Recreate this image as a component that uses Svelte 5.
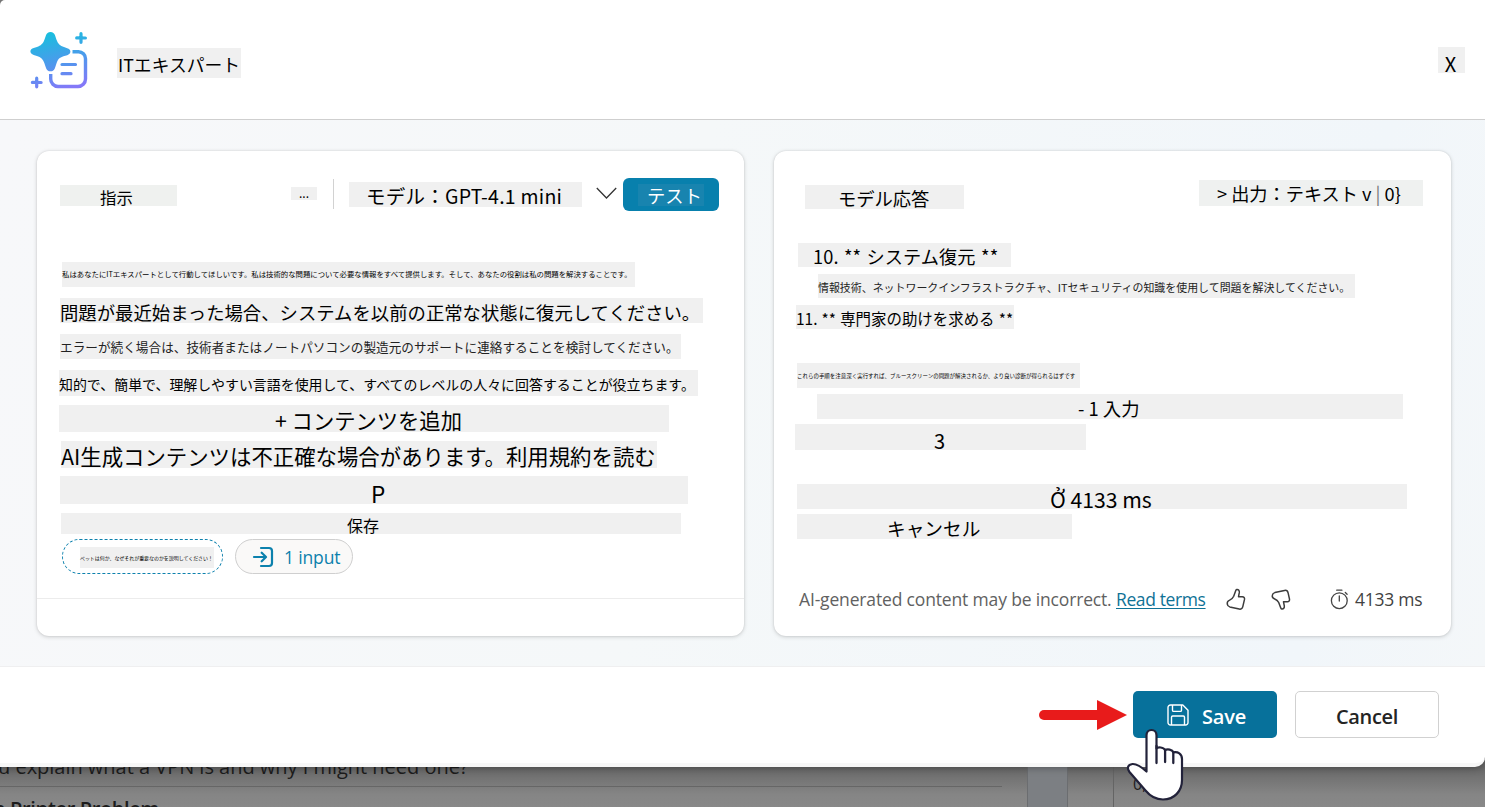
<script>
  const leftRows = [
    ['l1', '私はあなたにITエキスパートとして行動してほしいです。私は技術的な問題について必要な情報をすべて提供します。そして、あなたの役割は私の問題を解決することです。'],
    ['l2', '問題が最近始まった場合、システムを以前の正常な状態に復元してください。'],
    ['l3', 'エラーが続く場合は、技術者またはノートパソコンの製造元のサポートに連絡することを検討してください。'],
    ['l4', '知的で、簡単で、理解しやすい言語を使用して、すべてのレベルの人々に回答することが役立ちます。'],
    ['l5', '+ コンテンツを追加'],
    ['l6', 'AI生成コンテンツは不正確な場合があります。利用規約を読む'],
    ['l7', 'P'],
    ['l8', '保存']
  ];
  const rightRows = [
    ['r1', '10. ** システム復元 **'],
    ['r2', '情報技術、ネットワークインフラストラクチャ、ITセキュリティの知識を使用して問題を解決してください。'],
    ['r3', '11. ** 専門家の助けを求める **'],
    ['r4', 'これらの手順を注意深く実行すれば、ブルースクリーンの問題が解決されるか、より良い診断が得られるはずです'],
    ['r5', '- 1 入力'],
    ['r6', '3'],
    ['r7', 'Ở 4133 ms'],
    ['r8', 'キャンセル']
  ];
</script>

<div class="screen">
  <div class="backdrop">
    <div class="list">
      <div class="q"><span>u explain what a VPN is and why I might need one?</span></div>
      <div class="q2"><span>a Printer Problem</span></div>
    </div>
    <div class="gutter"></div>
    <div class="mid"></div>
    <div class="rest"><span>0,</span></div>
  </div>

  <section class="dialog">
    <header>
      <svg class="logo" width="60" height="60" viewBox="0 0 60 60" fill="none">
        <defs>
          <linearGradient id="g" x1="15" y1="0" x2="30" y2="60" gradientUnits="userSpaceOnUse">
            <stop offset="0" stop-color="#12c3dc" />
            <stop offset=".55" stop-color="#4c9aec" />
            <stop offset="1" stop-color="#8478f8" />
          </linearGradient>
        </defs>
        <path fill="url(#g)" d="M20.500 2c2.300 0 3.900 1.500 4.600 3.500l1.400 4.300c1.500 4 3.500 6 7.500 7.300l3.200 1.100c2 .7 3.200 1.700 3.200 3.300s-1.200 3-3.200 3.700l-3.700 1.100c-3.300 1.100-5.200 2.400-6.700 6.200l-1.900 5.700c-.7 2-2.200 3.100-4.400 3.100s-3.700-1.100-4.400-3.100l-1.700-5c-1.400-4.200-3.500-6-7.500-7.200l-3.200-1.100c-2-.7-3.300-1.800-3.300-3.400s1.300-2.700 3.300-3.400l3.200-1.100c4-1.300 6-3.200 7.500-7.200l1.500-4.300c.7-2 2.300-3.500 4.600-3.500Z" />
        <path stroke="url(#g)" stroke-width="3.400" d="M42.500 21.700h6a7 7 0 0 1 7 7V49a7.500 7.500 0 0 1-7.500 7.500H28A7.500 7.500 0 0 1 20.700 49v-5" />
        <path stroke="url(#g)" stroke-width="3.200" stroke-linecap="round" d="M32 34.500h13.500M32 43.700h9M51 3.700v8.600M46.700 7.900L55.400 8M6.700 48.200v8.600M2.400 52.400L11.100 52.500" />
      </svg>
      <h1>ITエキスパート</h1>
      <button class="close">X</button>
    </header>

    <main>
      <article class="card left">
        <div class="head">
          <span class="tag instr">指示</span>
          <span class="tag dots">...</span>
          <i class="sep"></i>
          <span class="tag model">モデル：GPT-4.1 mini</span>
          <svg class="chev" width="21" height="13" viewBox="0 0 21 13" fill="none" stroke="#333" stroke-width="1.300"><path d="M.8 1 10.500 11 20.200 1" /></svg>
          <button class="test"><span>テスト</span></button>
        </div>
        {#each leftRows as [name, text]}
          <p class={name}><span>{text}</span></p>
        {/each}
        <div class="pills">
          <div class="prompt"><span>ペットは何か、なぜそれが重要なのかを説明してください！</span></div>
          <div class="input">
            <svg width="22" height="22" viewBox="0 0 22 22" fill="none" stroke="#0c81ad" stroke-width="2.200" stroke-linecap="round" stroke-linejoin="round"><path d="M2 11h11.500M9.700 6.700l4.300 4.300-4.300 4.300M9 2h8a3 3 0 0 1 3 3v12a3 3 0 0 1-3 3H9" /></svg>
            <span>1 input</span>
          </div>
        </div>
        <div class="base"></div>
      </article>

      <article class="card right">
        <div class="head">
          <span class="tag resp">モデル応答</span>
          <span class="tag out">&gt; 出力：テキスト v <i>|</i> 0&#125;</span>
        </div>
        {#each rightRows as [name, text]}
          <p class={name}><span>{text}</span></p>
        {/each}
        <div class="info">
          <span class="note">AI-generated content may be incorrect.</span>
          <a href="#terms">Read terms</a>
          <svg class="up" width="20" height="23" viewBox="0 0 20 23" fill="none" stroke="#3c3c3c" stroke-width="1.500" stroke-linejoin="round"><path d="M10.700 1.500c1.800-.4 2.900 1.200 2.600 3.200l-.8 4h3.800c1.600 0 2.500 1.200 2.200 2.700l-1.700 7.300c-.4 1.800-1.800 2.800-3.600 2.400L3.800 18.900c-1.400-.4-2.300-1.400-2.500-2.800-.3-1.800.5-3.100 2-3.700 2.400-.9 3.400-2 4.400-4.200L9.600 3c.3-.8.400-1.300 1.100-1.500Z" /></svg>
          <svg class="down" width="20" height="23" viewBox="0 0 20 23" fill="none" stroke="#3c3c3c" stroke-width="1.500" stroke-linejoin="round"><path d="M10.700 21c1.800.4 2.900-1.200 2.600-3.200l-.8-4h3.800c1.600 0 2.500-1.200 2.200-2.700l-1.400-6.300c-.4-1.800-1.800-2.800-3.600-2.400L3.800 4.600C2.400 5 1.500 6 1.300 7.400c-.3 1.600.5 2.700 2 3.300 2.400.9 3.400 1.600 4.400 3.800l1.900 5c.3.800.4 1.300 1.100 1.500Z" /></svg>
          <svg class="watch" width="19" height="21" viewBox="0 0 19 21" fill="none" stroke="#444" stroke-width="1.300" stroke-linecap="round"><circle cx="9.300" cy="11.700" r="7.900" /><path d="M9.300 7v5M6.700 1.200h5.200M15.300 3.500l1.800 1.700" /></svg>
          <span class="ms">4133 ms</span>
        </div>
      </article>
    </main>

    <footer>
      <svg class="arrow" width="88" height="30" viewBox="0 0 88 30"><path d="M5 15h56" stroke="#e81b1b" stroke-width="10" stroke-linecap="round" /><path d="M58 0 88 15 58 30Z" fill="#e81b1b" /></svg>
      <button class="save">
        <svg width="22" height="22" viewBox="0 0 22 22" fill="none" stroke="#fff" stroke-width="1.400" stroke-linejoin="round"><path d="M3.500 1h12.300L21 6.200v12.300a2.500 2.500 0 0 1-2.500 2.500h-15A2.500 2.500 0 0 1 1 18.500v-15A2.500 2.500 0 0 1 3.500 1ZM5.500 1v5.200c0 .7.500 1.200 1.200 1.200h6.600c.7 0 1.200-.5 1.200-1.200V1M4.500 21v-7.800c0-.7.500-1.200 1.200-1.200h10.600c.7 0 1.200.5 1.200 1.200V21" /></svg>
        <span>Save</span>
      </button>
      <button class="cancel">Cancel</button>
    </footer>
  </section>

  <svg class="hand" width="62" height="78" viewBox="0 0 62 78"><path d="M25.500 3c3 0 5 2.200 5 5.500v13c1-1.800 7.500-1.500 8.600 1.700 2.200-1.700 7.200-.7 8.200 2.200 4.500-1 8.700 1.600 8.700 6.600v21c0 11-7.500 19.500-19 19.500-8 0-13-3.500-17.500-9L3.500 45c-3-4-1.500-7.500 3-8 4.500-.3 8.500 2.500 14 7.500V8.500c0-3.300 2-5.500 5-5.500Z" fill="#fff" stroke="#22223a" stroke-width="2.200" stroke-linejoin="round" /><path d="M30.500 19v17M39.100 23v12M47.300 25v11" stroke="#22223a" stroke-width="2.300" stroke-linecap="round" /></svg>
</div>

<style>
  :global(body) { margin: 0; overflow: hidden; }
  * { box-sizing: border-box; }
  .screen { position: relative; width: 1485px; height: 807px; overflow: hidden; background: #858585; font-family: "Noto Sans CJK JP", sans-serif; color: #000; display: flex; flex-direction: column; }
  button { font: inherit; border: 0; padding: 0; margin: 0; display: flex; align-items: center; justify-content: center; }
  h1, p { margin: 0; font-weight: 400; }

  .backdrop { position: absolute; left: 0; top: 757px; width: 1485px; height: 50px; display: flex; background: linear-gradient(#686868 20%, #858585 75%, #888); font-family: "Open Sans", sans-serif; color: #1c1c1c; }
  .list { width: 1002px; flex: none; font-size: 20px; white-space: nowrap; }
  .q { height: 30px; border-bottom: 1px solid #666; line-height: 20px; letter-spacing: -.02px; }
  .q span { margin-left: -2px; }
  .q2 { font-weight: 600; line-height: 43px; margin-left: -6px; letter-spacing: -.35px; }
  .gutter { width: 25px; flex: none; }
  .mid { width: 41px; flex: none; background: #7c7f83; border: solid #6b6d70; border-width: 0 1px; }
  .rest { flex: 1; margin-left: 45px; border-left: 1px solid #646464; font-size: 16px; padding: 18px 0 0 19px; line-height: 18px; }

  .dialog { position: relative; width: 1485px; height: 767px; background: #fff; border-bottom-right-radius: 10px; border-top-left-radius: 5px; border-bottom: 4px solid #f7f7f7; display: flex; flex-direction: column; box-shadow: 0 0 8px #0006; }
  header { height: 120px; flex: none; display: flex; align-items: flex-start; border-bottom: 1px solid #cfcfcf; padding-left: 30px; }
  .logo { margin-top: 30px; }
  h1 { margin: 48px 0 0 27px; width: 124px; height: 30px; background: #f0f0f0; font-size: 17.800px; line-height: 33px; white-space: nowrap; padding-left: 1px; }
  .close { margin: 47px 20px 0 auto; width: 27px; height: 26px; background: #f0f0f0; font-size: 20px; line-height: 33px; padding: 6px 2px 0 0; }

  main { height: 547px; flex: none; display: flex; align-items: flex-start; gap: 30px; padding: 31px 0 0 37px; border-bottom: 1px solid #efeff0; background: linear-gradient(100deg, #f7f8fa 0%, #f5f8f9 45%, #f1f6fa 88%, #f4f7f9 100%); }
  .card { height: 485px; border-radius: 12px; background: #fff; box-shadow: 0 1px 4px #0000002b, 0 0 2px #0000001c; display: flex; flex-direction: column; white-space: nowrap; }
  .left { width: 707px; }
  .right { width: 677px; }
  .head { display: flex; align-items: flex-start; flex: none; }
  .left .head { height: 111px; padding: 27px 0 0 23px; }
  .right .head { height: 92px; padding: 29px 0 0 31px; }
  .tag { background: #f0f0f0; line-height: 20px; flex: none; }
  .instr { margin-top: 7px; width: 117px; height: 21px; background: #eff1ef; padding: 2px 0 0 40px; font-size: 16.400px; }
  .dots { margin: 9px 0 0 114px; width: 26px; height: 13px; font-size: 12px; line-height: 11px; padding-left: 8px; }
  .sep { margin: 1px 0 0 16px; width: 1px; height: 30px; background: #d2d2d2; }
  .model { margin: 4px 0 0 15px; width: 233px; height: 25px; font-size: 19.500px; letter-spacing: .25px; padding: 4px 0 0 17px; }
  .chev { margin: 9px 0 0 14px; }
  .test { margin-left: 6px; width: 96px; height: 33px; border-radius: 6px; background: #0880ad; color: #fff; font-size: 18.300px; }
  .test span { width: 66px; height: 22px; background: #1884af; line-height: 23px; padding-left: 7px; }
  .resp { margin-top: 5px; width: 159px; height: 24px; padding: 3px 0 0 33px; font-size: 18.300px; }
  .out { margin-left: 235px; width: 224px; height: 26px; background: #eff1f0; font-size: 18.200px; padding: 3px 0 0 18px; }
  .out i { font-style: normal; color: #777; }

  p { background: #f0f0f0; display: flex; align-items: flex-start; flex: none; line-height: 20px; }
  .l1 { margin-left: 25px; width: 573px; height: 25px; font-size: 7.390px; padding-top: 2px; }
  .l2 { margin: 11px 0 0 23px; width: 643px; height: 25px; font-size: 18.380px; padding-top: 4px; }
  .l3 { margin: 11px 0 0 23px; width: 621px; height: 25px; font-size: 12.650px; padding-top: 3px; color: #222; }
  .l4 { margin: 11px 0 0 22px; width: 639px; height: 26px; font-size: 13.940px; padding-top: 4px; }
  .l5 { margin: 9px 0 0 22px; width: 610px; height: 27px; font-size: 21.300px; padding: 5px 0 0 216px; }
  .l6 { margin: 9px 0 0 24px; width: 596px; height: 27px; font-size: 21.400px; padding-top: 5px; }
  .l7 { margin: 8px 0 0 23px; width: 628px; height: 28px; font-size: 22.500px; padding: 7px 0 0 311px; }
  .l8 { margin: 9px 0 0 24px; width: 620px; height: 21px; font-size: 16px; padding: 2px 0 0 286px; }
  .pills { margin: 5px 0 0 25px; display: flex; gap: 12px; height: 35px; flex: none; }
  .prompt { width: 161px; border: 1px dashed #0c81ad; border-radius: 18px; padding: 7px 0 0 17px; }
  .prompt span { display: block; width: 134px; height: 21px; background: #f0f0f0; font-size: 4.950px; line-height: 21px; }
  .input { width: 118px; border: 1px solid #cfcfcf; border-radius: 18px; background: #faf9f8; display: flex; align-items: center; padding-left: 16px; color: #0c81ad; font: 17.500px/20px "Open Sans", sans-serif; }
  .input span { margin-left: 10px; letter-spacing: -.15px; padding-top: 1px; }
  .base { margin-top: 24px; border-top: 1px solid #ececec; }

  .r1 { margin-left: 24px; width: 213px; height: 24px; font-size: 18.200px; word-spacing: 1.200px; letter-spacing: .1px; padding: 3px 0 0 15px; }
  .r2 { margin: 7px 0 0 44px; width: 537px; height: 24px; font-size: 10.950px; padding-top: 3px; color: #222; }
  .r3 { margin: 7px 0 0 22px; width: 218px; height: 24px; font-size: 15.450px; word-spacing: .700px; padding-top: 3px; }
  .r4 { margin: 34px 0 0 23px; width: 283px; height: 25px; font-size: 5.475px; padding-top: 3px; }
  .r5 { margin: 6px 0 0 43px; width: 586px; height: 25px; font-size: 18.400px; padding: 4px 0 0 261px; }
  .r6 { margin: 5px 0 0 21px; width: 291px; height: 26px; font-size: 20px; padding: 7px 0 0 139px; }
  .r7 { margin: 34px 0 0 23px; width: 610px; height: 25px; font-size: 21.200px; padding: 5px 0 0 253px; }
  .r8 { margin: 5px 0 0 23px; width: 275px; height: 25px; font-size: 18.700px; padding: 4px 0 0 90px; }
  .info { margin: 45px 0 0 25px; height: 30px; display: flex; align-items: center; font: 17.500px/24px "Open Sans", sans-serif; color: #616161; }
  .note { width: 317px; letter-spacing: -.16px; }
  .info a { color: #0f7296; text-decoration: underline; text-underline-offset: 2px; width: 90px; letter-spacing: -.38px; }
  .up { margin-left: 20px; }
  .down { margin-left: 25px; }
  .watch { margin-left: 39px; }
  .ms { margin: -1px 0 0 6px; color: #424242; letter-spacing: -.25px; }

  footer { flex: 1; display: flex; align-items: flex-start; padding: 24px 0 0 1039px; font-family: "Open Sans", sans-serif; font-size: 20px; font-weight: 600; }
  .arrow { margin: 9px 6px 0 0; flex: none; }
  .save { width: 144px; height: 47px; border-radius: 5px; background: #07719b; color: #fff; gap: 13px; padding: 3px 0 0 3px; }
  .save svg { margin-top: -3px; }
  .save span { letter-spacing: -.2px; }
  .cancel { margin-left: 18px; width: 144px; height: 47px; border: 1px solid #d1d1d1; border-radius: 5px; background: #fff; color: #242424; padding-top: 3px; letter-spacing: -.3px; }
  .hand { position: absolute; left: 1126px; top: 727px; }
</style>
